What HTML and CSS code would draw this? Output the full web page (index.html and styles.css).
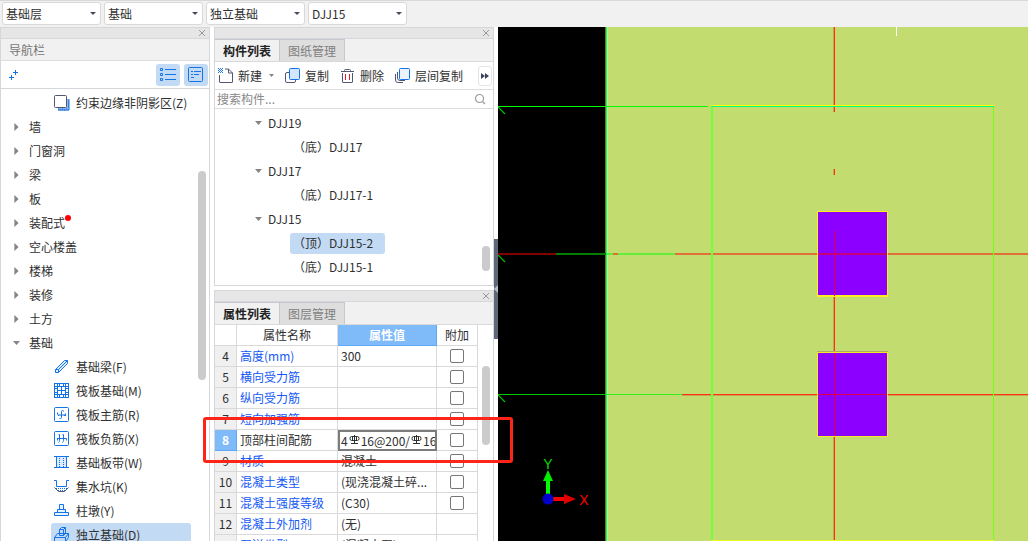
FILE: index.html
```html
<!DOCTYPE html>
<html lang="zh-CN">
<head>
<meta charset="utf-8">
<title>独立基础</title>
<link rel="stylesheet" href="styles.css">
</head>
<body>
<header class="topbar">
  <label class="combo"><select aria-label="楼层"><option>基础层</option></select></label>
  <label class="combo"><select aria-label="构件类别"><option>基础</option></select></label>
  <label class="combo"><select aria-label="构件类型"><option>独立基础</option></select></label>
  <label class="combo"><select aria-label="构件"><option>DJJ15</option></select></label>
</header>
<main class="workspace">
  <nav class="panel nav">
    <div class="strip"><button class="close" aria-label="关闭"><svg width="8" height="8" viewBox="0 0 8 8"><path d="M1 1l6 6M7 1l-6 6"/></svg></button></div>
    <h2 class="nav-title">导航栏</h2>
    <div class="nav-tools">
      <button class="plain" aria-label="添加"><svg width="12" height="12" viewBox="0 0 12 12" class="blue"><path d="M7.500 1v5M5 3.500h5M3.500 6v5M1 8.500h5"/></svg></button>
      <button class="toggle" aria-label="列表"><svg width="16" height="14" viewBox="0 0 16 14" class="blue"><path d="M.5.500h2v2h-2zM.5 5.500h2v2h-2zM.5 10.500h2v2h-2zM5 1.500h11M5 6.500h11M5 11.500h11"/></svg></button>
      <button class="toggle" aria-label="详细"><svg width="16" height="16" viewBox="0 0 16 16" class="blue"><rect x=".5" y=".5" width="14" height="14" rx="1"/><path d="M3 4.500h2M6 4.500h7M3 7.500h2M6 7.500h5M3 10.500h3"/></svg></button>
    </div>
    <ul class="tree nav-tree">
      <li class="leaf"><svg width="16" height="16" viewBox="0 0 16 16"><path d="M4 13v2.500h11V4h-2" fill="#8ab8f2"/><path d="M4 15h11V4M4 14h1M6 15h1M8 14h1M10 15h1M12 14h1M14 12h1M14 10h1M14 8h1M14 6h1" fill="none" stroke="#1f73dc"/><rect x=".5" y=".5" width="12" height="12" rx="1" fill="#fff" stroke="#525873"/></svg>约束边缘非阴影区(Z)</li>
      <li><i class="arrow right"></i>墙</li>
      <li><i class="arrow right"></i>门窗洞</li>
      <li><i class="arrow right"></i>梁</li>
      <li><i class="arrow right"></i>板</li>
      <li><i class="arrow right"></i><span class="flagged">装配式</span></li>
      <li><i class="arrow right"></i>空心楼盖</li>
      <li><i class="arrow right"></i>楼梯</li>
      <li><i class="arrow right"></i>装修</li>
      <li><i class="arrow right"></i>土方</li>
      <li><i class="arrow down"></i>基础</li>
      <li class="leaf"><svg width="16" height="16" viewBox="0 0 16 16" class="blue"><path d="M1.500 10.500L10.500 1.500h3v3L4.500 13.500h-3zM1.500 10.500h3v3M4.500 10.500l9-9" fill="#dcebff"/></svg>基础梁(F)</li>
      <li class="leaf"><svg width="16" height="16" viewBox="0 0 16 16" class="blue"><path d="M.5 0v15M3.500 0v15M7.500 3v9M11.500 0v15M14.500 0v15M0 .5h15M0 3.500h15M3 7.500h9M0 11.500h15M0 14.500h15M5.500 0v3M9.500 0v3M5.500 12v3M9.500 12v3M0 5.500h3M0 9.500h3M12 5.500h3M12 9.500h3"/></svg>筏板基础(M)</li>
      <li class="leaf"><svg width="16" height="16" viewBox="0 0 16 16" class="blue"><rect x=".5" y=".5" width="14" height="14" rx="1"/><path d="M3.500 5.500v1.500q0 1 1 1h7v-1.500M9.500 4.500q0-1-1-1t-1 1v6q0 1-1 1h-1M4 8.500h1M10 8.500h2"/></svg>筏板主筋(R)</li>
      <li class="leaf"><svg width="16" height="16" viewBox="0 0 16 16" class="blue"><rect x=".5" y=".5" width="14" height="14" rx="1"/><path d="M4.500 3.500h1v6q0 1-1 2M8.500 3.500h1v6q0 1-1 2M3 7.500h9.500v2M3.500 7.500v2"/></svg>筏板负筋(X)</li>
      <li class="leaf"><svg width="16" height="16" viewBox="0 0 16 16" class="blue"><path d="M2 2h11v10H2z" fill="#dcebff" stroke="none"/><path d="M0 1.500h15M0 12.500h15M2.500 2v10M12.500 2v10"/><path d="M5.500 3v10M9.500 3v10" stroke-dasharray="1 1"/></svg>基础板带(W)</li>
      <li class="leaf"><svg width="16" height="16" viewBox="0 0 16 16" class="blue"><path d="M0 1.500h2.500v6h10v-6H15"/><path d="M.5 8.500l4 4h6l4-4" stroke="#525873"/><path d="M2 9.500h11M4 11.500h8" stroke-dasharray="1 1"/></svg>集水坑(K)</li>
      <li class="leaf"><svg width="16" height="16" viewBox="0 0 16 16" class="blue"><path d="M.5 9.500h14v3H.5zM3.500 9.500v-3h8v3M5.500 6.500v-5h4v5" fill="#e8f2ff"/></svg>柱墩(Y)</li>
      <li class="leaf selected"><svg width="16" height="16" viewBox="0 0 16 16" class="blue"><path d="M.5 10.500l3-4h11v4l-3 4H.5zM.5 10.500h11l3-4M11.500 10.500v4M5.500 8.500v-6l2-2h4v6l-2 2zM5.500 2.500h4v6M9.500 2.500l2-2"/></svg>独立基础(D)</li>
    </ul>
    <div class="thumb nav-thumb"></div>
  </nav>
  <div class="middle">
    <section class="panel components">
      <div class="strip"><button class="close" aria-label="关闭"><svg width="8" height="8" viewBox="0 0 8 8"><path d="M1 1l6 6M7 1l-6 6"/></svg></button></div>
      <div class="tabs"><button class="tab active">构件列表</button><button class="tab">图纸管理</button></div>
      <div class="tools">
        <button><svg width="16" height="16" viewBox="0 0 16 16"><path d="M1.500 7v7q0 .5.500.5h12q.5 0 .5-.5V5l-4-4H7M10.500 1v4h4" fill="none" stroke="#525873"/><path d="M0 .5h5M0 2.500h5M0 4.500h5" stroke="#1f7be8" stroke-dasharray="1 1"/><path d="M1 1.500h4M1 3.500h4" stroke="#1f7be8" stroke-dasharray="1 1"/></svg>新建<i class="arrow down"></i></button>
        <button><svg width="16" height="16" viewBox="0 0 16 16"><rect x=".5" y="4.500" width="10" height="10" rx="1.500" fill="#fff" stroke="#525873"/><rect x="4.500" y=".5" width="10" height="11" rx="1" fill="#d3e6ff" stroke="#1473e6"/></svg>复制</button>
        <button><svg width="16" height="16" viewBox="0 0 16 16"><path d="M1 3.500h13M4.500 3.500v-1q0-1 1-1h4q1 0 1 1v1M2.500 5v9q0 .5.500.5h9q.5 0 .5-.5V5" fill="none" stroke="#525873"/><path d="M5.500 6v6M9.500 6v6" stroke="#e02020"/></svg>删除</button>
        <button><svg width="16" height="16" viewBox="0 0 16 16"><path d="M.5 6v6q0 2.500 2.500 2.500h5M2.500 4v6q0 2.500 2.500 2.500h5" fill="none" stroke="#525873"/><rect x="4.500" y=".5" width="10" height="11" rx="1" fill="#eaf3ff" stroke="#1473e6"/></svg>层间复制</button>
        <button class="more" aria-label="更多"><svg width="8" height="6" viewBox="0 0 8 6"><path d="M0 0l4 3-4 3zM4 0l4 3-4 3z" fill="#3d435c"/></svg></button>
      </div>
      <div class="search"><input type="search" placeholder="搜索构件..." aria-label="搜索构件"><svg width="12" height="12" viewBox="0 0 12 12" fill="none" stroke="#999" stroke-width="1.200"><circle cx="5.500" cy="5.500" r="4"/><path d="M8.500 8.500l2.500 2.500"/></svg></div>
      <ul class="tree comp-tree">
        <li><i class="arrow down"></i>DJJ19</li>
        <li class="child"><span>（底）DJJ17</span></li>
        <li><i class="arrow down"></i>DJJ17</li>
        <li class="child"><span>（底）DJJ17-1</span></li>
        <li><i class="arrow down"></i>DJJ15</li>
        <li class="child"><span class="selected">（顶）DJJ15-2</span></li>
        <li class="child"><span>（底）DJJ15-1</span></li>
      </ul>
      <div class="thumb comp-thumb"></div>
    </section>
    <section class="panel props">
      <div class="strip"><button class="close" aria-label="关闭"><svg width="8" height="8" viewBox="0 0 8 8"><path d="M1 1l6 6M7 1l-6 6"/></svg></button></div>
      <div class="tabs"><button class="tab active">属性列表</button><button class="tab">图层管理</button></div>
      <table>
        <thead><tr><th class="num"></th><th class="name">属性名称</th><th class="value current">属性值</th><th class="extra">附加</th></tr></thead>
        <tbody>
          <tr><th>4</th><td>高度(mm)</td><td>300</td><td><input type="checkbox" aria-label="附加 高度"></td></tr>
          <tr><th>5</th><td>横向受力筋</td><td></td><td><input type="checkbox" aria-label="附加 横向受力筋"></td></tr>
          <tr><th>6</th><td>纵向受力筋</td><td></td><td><input type="checkbox" aria-label="附加 纵向受力筋"></td></tr>
          <tr><th>7</th><td>短向加强筋</td><td></td><td><input type="checkbox" aria-label="附加 短向加强筋"></td></tr>
          <tr class="editing"><th>8</th><td>顶部柱间配筋</td><td>4<svg class="rebar" width="11" height="11" viewBox="0 0 11 11" role="img" aria-label="三级钢筋"><path d="M5.500 0v9M2.500 1.500h6q1.500 0 1.500 2t-1.500 2h-6Q1 5.500 1 3.500t1.500-2M3.500 1.500v4M7.500 1.500v4M2 8.500h7"/></svg>16@200/<svg class="rebar" width="11" height="11" viewBox="0 0 11 11" role="img" aria-label="三级钢筋"><path d="M5.500 0v9M2.500 1.500h6q1.500 0 1.500 2t-1.500 2h-6Q1 5.500 1 3.500t1.500-2M3.500 1.500v4M7.500 1.500v4M2 8.500h7"/></svg>16</td><td><input type="checkbox" aria-label="附加 顶部柱间配筋"></td></tr>
          <tr><th>9</th><td>材质</td><td>混凝土</td><td><input type="checkbox" aria-label="附加 材质"></td></tr>
          <tr><th>10</th><td>混凝土类型</td><td>(现浇混凝土碎...</td><td><input type="checkbox" aria-label="附加 混凝土类型"></td></tr>
          <tr><th>11</th><td>混凝土强度等级</td><td>(C30)</td><td><input type="checkbox" aria-label="附加 混凝土强度等级"></td></tr>
          <tr><th>12</th><td>混凝土外加剂</td><td>(无)</td><td></td></tr>
          <tr><th>13</th><td>泵送类型</td><td>(混凝土泵)</td><td></td></tr>
        </tbody>
      </table>
      <div class="thumb prop-thumb"></div>
    </section>
  </div>
  <div class="gutter"><button class="splitter" aria-label="收起"><svg width="4" height="8" viewBox="0 0 4 8"><path d="M4 0v8L0 4z" fill="#b8bec8"/></svg></button></div>
  <section class="canvas" aria-label="绘图区">
    <svg width="100%" height="100%" shape-rendering="crispEdges">
      <rect width="100%" height="100%" fill="#000"/>
      <rect x="108" width="100%" height="100%" fill="#c2dc70"/>
      <rect x="107" width="1" height="100%" fill="#728000"/>
      <rect x="108" width="1" height="100%" fill="#00ff80"/>
      <rect x="109" width="1" height="100%" fill="#d3e87c"/>
      <rect x="398" width="1" height="9" fill="#fff"/>
      <path d="M335.500 0v85M335.500 142v6M335.500 269v57M335.500 410v104" stroke="#d0a050"/>
      <path d="M336.500 0v85M336.500 142v6M336.500 269v57M336.500 410v104" stroke="#ff3018"/>
      <rect y="79" width="210" height="1" fill="#0f0"/>
      <path d="M0 80l7 7M0 228l7 7M0 368l7 7" stroke="#00c000" stroke-width="1.200" shape-rendering="auto"/>
      <rect y="226" width="58" height="2" fill="#800000"/>
      <rect x="58" y="226" width="50" height="2" fill="#008000"/>
      <rect x="109" y="226" width="68" height="2" fill="#60ee38"/>
      <rect x="115" y="226" width="5" height="2" fill="#e07038"/>
      <rect x="177" y="226" width="100%" height="2" fill="#e07038"/>
      <rect y="367" width="108" height="1" fill="#00c800"/>
      <rect x="109" y="367" width="75" height="1" fill="#30f020"/>
      <rect x="184" y="367" width="100%" height="1" fill="#ff3018"/>
      <rect x="184" y="368" width="100%" height="1" fill="#d0a050"/>
      <rect x="213" y="78" width="283" height="1" fill="#ff0"/>
      <rect x="213" y="79" width="283" height="1" fill="#00ff80"/>
      <rect x="213" y="80" width="2" height="434" fill="#70ff38"/>
      <rect x="495" y="80" width="1" height="434" fill="#70ff18"/>
      <rect x="213" y="513" width="283" height="1" fill="#f0ff20"/>
      <rect x="319" y="184" width="71" height="86" fill="#ffef20"/>
      <rect x="320" y="185" width="69" height="83" fill="#8c00ff"/>
      <rect x="319" y="324" width="71" height="1" fill="#b0a868"/>
      <rect x="319" y="325" width="71" height="85" fill="#f4e828"/>
      <rect x="320" y="326" width="69" height="83" fill="#8c00ff"/>
      <path d="M336.500 204v65M336.500 326v83" stroke="#e00038"/>
      <rect x="320" y="226" width="69" height="2" fill="#c80078"/>
      <rect x="320" y="367" width="69" height="1" fill="#e00048"/>
      <g shape-rendering="auto">
        <rect x="48" y="454" width="4" height="18" fill="#0f0"/>
        <path d="M50 443l5 11H45z" fill="#0e0"/>
        <rect x="54" y="470" width="14" height="4" fill="#f00"/>
        <path d="M78 472l-12 5v-10z" fill="#e00000"/>
        <circle cx="50" cy="472" r="5.500" fill="#00c"/>
        <text x="50" y="442" class="axis" fill="#0d0">Y</text>
        <text x="86" y="478" class="axis" fill="#f00">X</text>
      </g>
    </svg>
  </section>
</main>
<div class="highlight"></div>
</body>
</html>
```
FILE: styles.css
```css
* { box-sizing: border-box; }
body {
  margin: 0;
  height: 100vh;
  overflow: hidden;
  position: relative;
  display: flex;
  flex-direction: column;
  background: #fff;
  color: #303030;
  font: 12px/20px "Noto Sans CJK SC", sans-serif;
}
button, select, input { font: inherit; color: inherit; margin: 0; }
button { border: 0; padding: 0; background: none; display: flex; align-items: center; justify-content: center; }
svg { display: block; flex: none; }
.blue { fill: none; stroke: #1473e6; stroke-width: 1; }

.topbar { flex: none; height: 27px; display: flex; gap: 3px; padding: 1px 2px; background: #f1f1f1; border-top: 1px solid #d8d8d8; }
.combo { position: relative; width: 99px; height: 23px; }
.combo select { appearance: none; width: 100%; height: 100%; padding: 0 3px; border: 1px solid #d9d9d9; border-radius: 3px; background: #fff; }
.combo::after { content: ""; position: absolute; right: 5px; top: 10px; border: 3px solid transparent; border-top: 3px solid #444c5c; border-bottom: 0; }

.workspace { flex: 1; min-height: 0; display: flex; }
.panel { position: relative; display: flex; flex-direction: column; border: 1px solid #d5d7db; background: #fff; overflow: hidden; }
.nav { flex: none; width: 210px; margin-right: 4px; border-bottom: 0; }
.middle { flex: none; width: 280px; display: flex; flex-direction: column; gap: 4px; }
.components { flex: none; height: 259px; }
.props { flex: 1; min-height: 0; border-bottom: 0; }
.strip { flex: none; height: 11px; display: flex; justify-content: flex-end; padding-right: 3px; background: #e6e6e6; border-bottom: 1px solid #d5d7db; }
.close svg { stroke: #999; stroke-width: 1; }
.nav-title { flex: none; margin: 0; height: 22px; padding-left: 8px; background: #f1f1f1; border-bottom: 1px solid #ddd; color: #777; font-size: 12px; font-weight: 400; line-height: 21px; }
.nav-tools { flex: none; height: 28px; display: flex; align-items: center; gap: 4px; padding: 0 1px 0 7px; border-bottom: 1px solid #d5d7db; }
.plain { margin-right: auto; }
.toggle { width: 24px; height: 22px; border-radius: 3px; background: #c2daf3; }

.tree { list-style: none; margin: 0; padding: 2px 0 0; }
.tree li { height: 24px; display: flex; align-items: center; white-space: nowrap; }
.nav-tree li { padding-left: 12px; }
.nav-tree .arrow { margin-right: 9px; }
.nav-tree .leaf { margin: 0 18px 0 50px; padding-left: 3px; gap: 6px; border-radius: 3px; }
.selected { background: #c2daf3; }
.arrow { flex: none; width: 7px; height: 8px; }
.arrow.right { background: #858585; clip-path: polygon(20% 0, 80% 50%, 20% 100%); }
.arrow.down { height: 4px; background: #858585; clip-path: polygon(0 0, 100% 0, 50% 100%); }
.flagged { position: relative; }
.flagged::after { content: ""; position: absolute; left: 36px; top: 2px; width: 6px; height: 6px; border-radius: 50%; background: #f00; }
.comp-tree li { padding-left: 40px; }
.comp-tree .arrow { margin-right: 6px; }
.comp-tree .child { padding-left: 75px; }
.child span { height: 21px; padding: 0 12px 0 3px; border-radius: 3px; }

.thumb { position: absolute; width: 8px; border-radius: 4px; background: #cbcbcb; }
.nav-thumb { right: 3px; top: 143px; height: 209px; }
.comp-thumb { right: 3px; bottom: 14px; height: 25px; }
.prop-thumb { right: 3px; top: 75px; height: 79px; }

.tabs { flex: none; height: 23px; display: flex; background: #f1f1f1; border-bottom: 1px solid #d9d9d9; }
.tab { width: 65px; border-right: 1px solid #c5c8cd; border-top: 1px solid #c5c8cd; background: #dedede; color: #808080; }
.tab.active { background: #f1f1f1; color: #222; font-weight: 700; }
.tools { flex: none; height: 28px; display: flex; align-items: center; gap: 11px; padding: 0 1px 0 3px; border-bottom: 1px solid #ddd; white-space: nowrap; }
.tools button { gap: 4px; }
.tools .arrow { width: 5px; height: 3px; margin-left: 3px; }
.tools .more { width: 14px; height: 20px; margin-left: auto; border: 1px solid #e5e5e5; border-radius: 3px; }
.search { flex: none; height: 19px; display: flex; align-items: center; padding: 0 7px 0 2px; border-bottom: 1px solid #ddd; }
.search input { flex: 1; min-width: 0; height: 18px; padding: 0; border: 0; outline: 0; background: none; appearance: none; }
.search input::placeholder { color: #888; opacity: 1; }

table { table-layout: fixed; width: 263px; border-collapse: separate; border-spacing: 0; }
th, td { height: 21px; padding: 0 0 0 3px; border-right: 1px solid #d9d9d9; border-bottom: 1px solid #d9d9d9; font-weight: 400; line-height: 20px; text-align: left; white-space: nowrap; overflow: hidden; }
thead th { padding: 0; text-align: center; }
.num { width: 22px; }
.name { width: 101px; }
.value { width: 99px; }
.extra { width: 41px; }
.current, .editing th { background: #80bbf9; border-color: #5fa8f5; color: #fff; font-weight: 700; }
tbody th { padding: 0; text-align: center; background: #f0f0f0; }
tbody .editing th { background: #80bbf9; }
tbody td:nth-child(2) { color: #1458f5; }
tbody .editing td:nth-child(2) { color: #303030; }
.editing td:nth-child(3) { padding-left: 1px; border: 2px solid #7c7c7c; line-height: 17px; }
.rebar { display: inline-block; margin: 0 1px; vertical-align: 0; fill: none; stroke: #303030; }
td:last-child { padding: 0; }
td input { appearance: none; display: block; width: 14px; height: 14px; margin: 0 auto; border: 1px solid #777; border-radius: 2px; background: #fff; }

.gutter { flex: none; width: 4px; padding-top: 212px; }
.splitter { width: 4px; height: 100px; background: #5d6878; }
.canvas { flex: 1; min-width: 0; background: #000; }
.axis { font: 14px "Liberation Sans", sans-serif; text-anchor: middle; }
.highlight { position: absolute; left: 203px; top: 417px; width: 310px; height: 46px; border: 3px solid #ff2418; border-radius: 3px; pointer-events: none; }
```
